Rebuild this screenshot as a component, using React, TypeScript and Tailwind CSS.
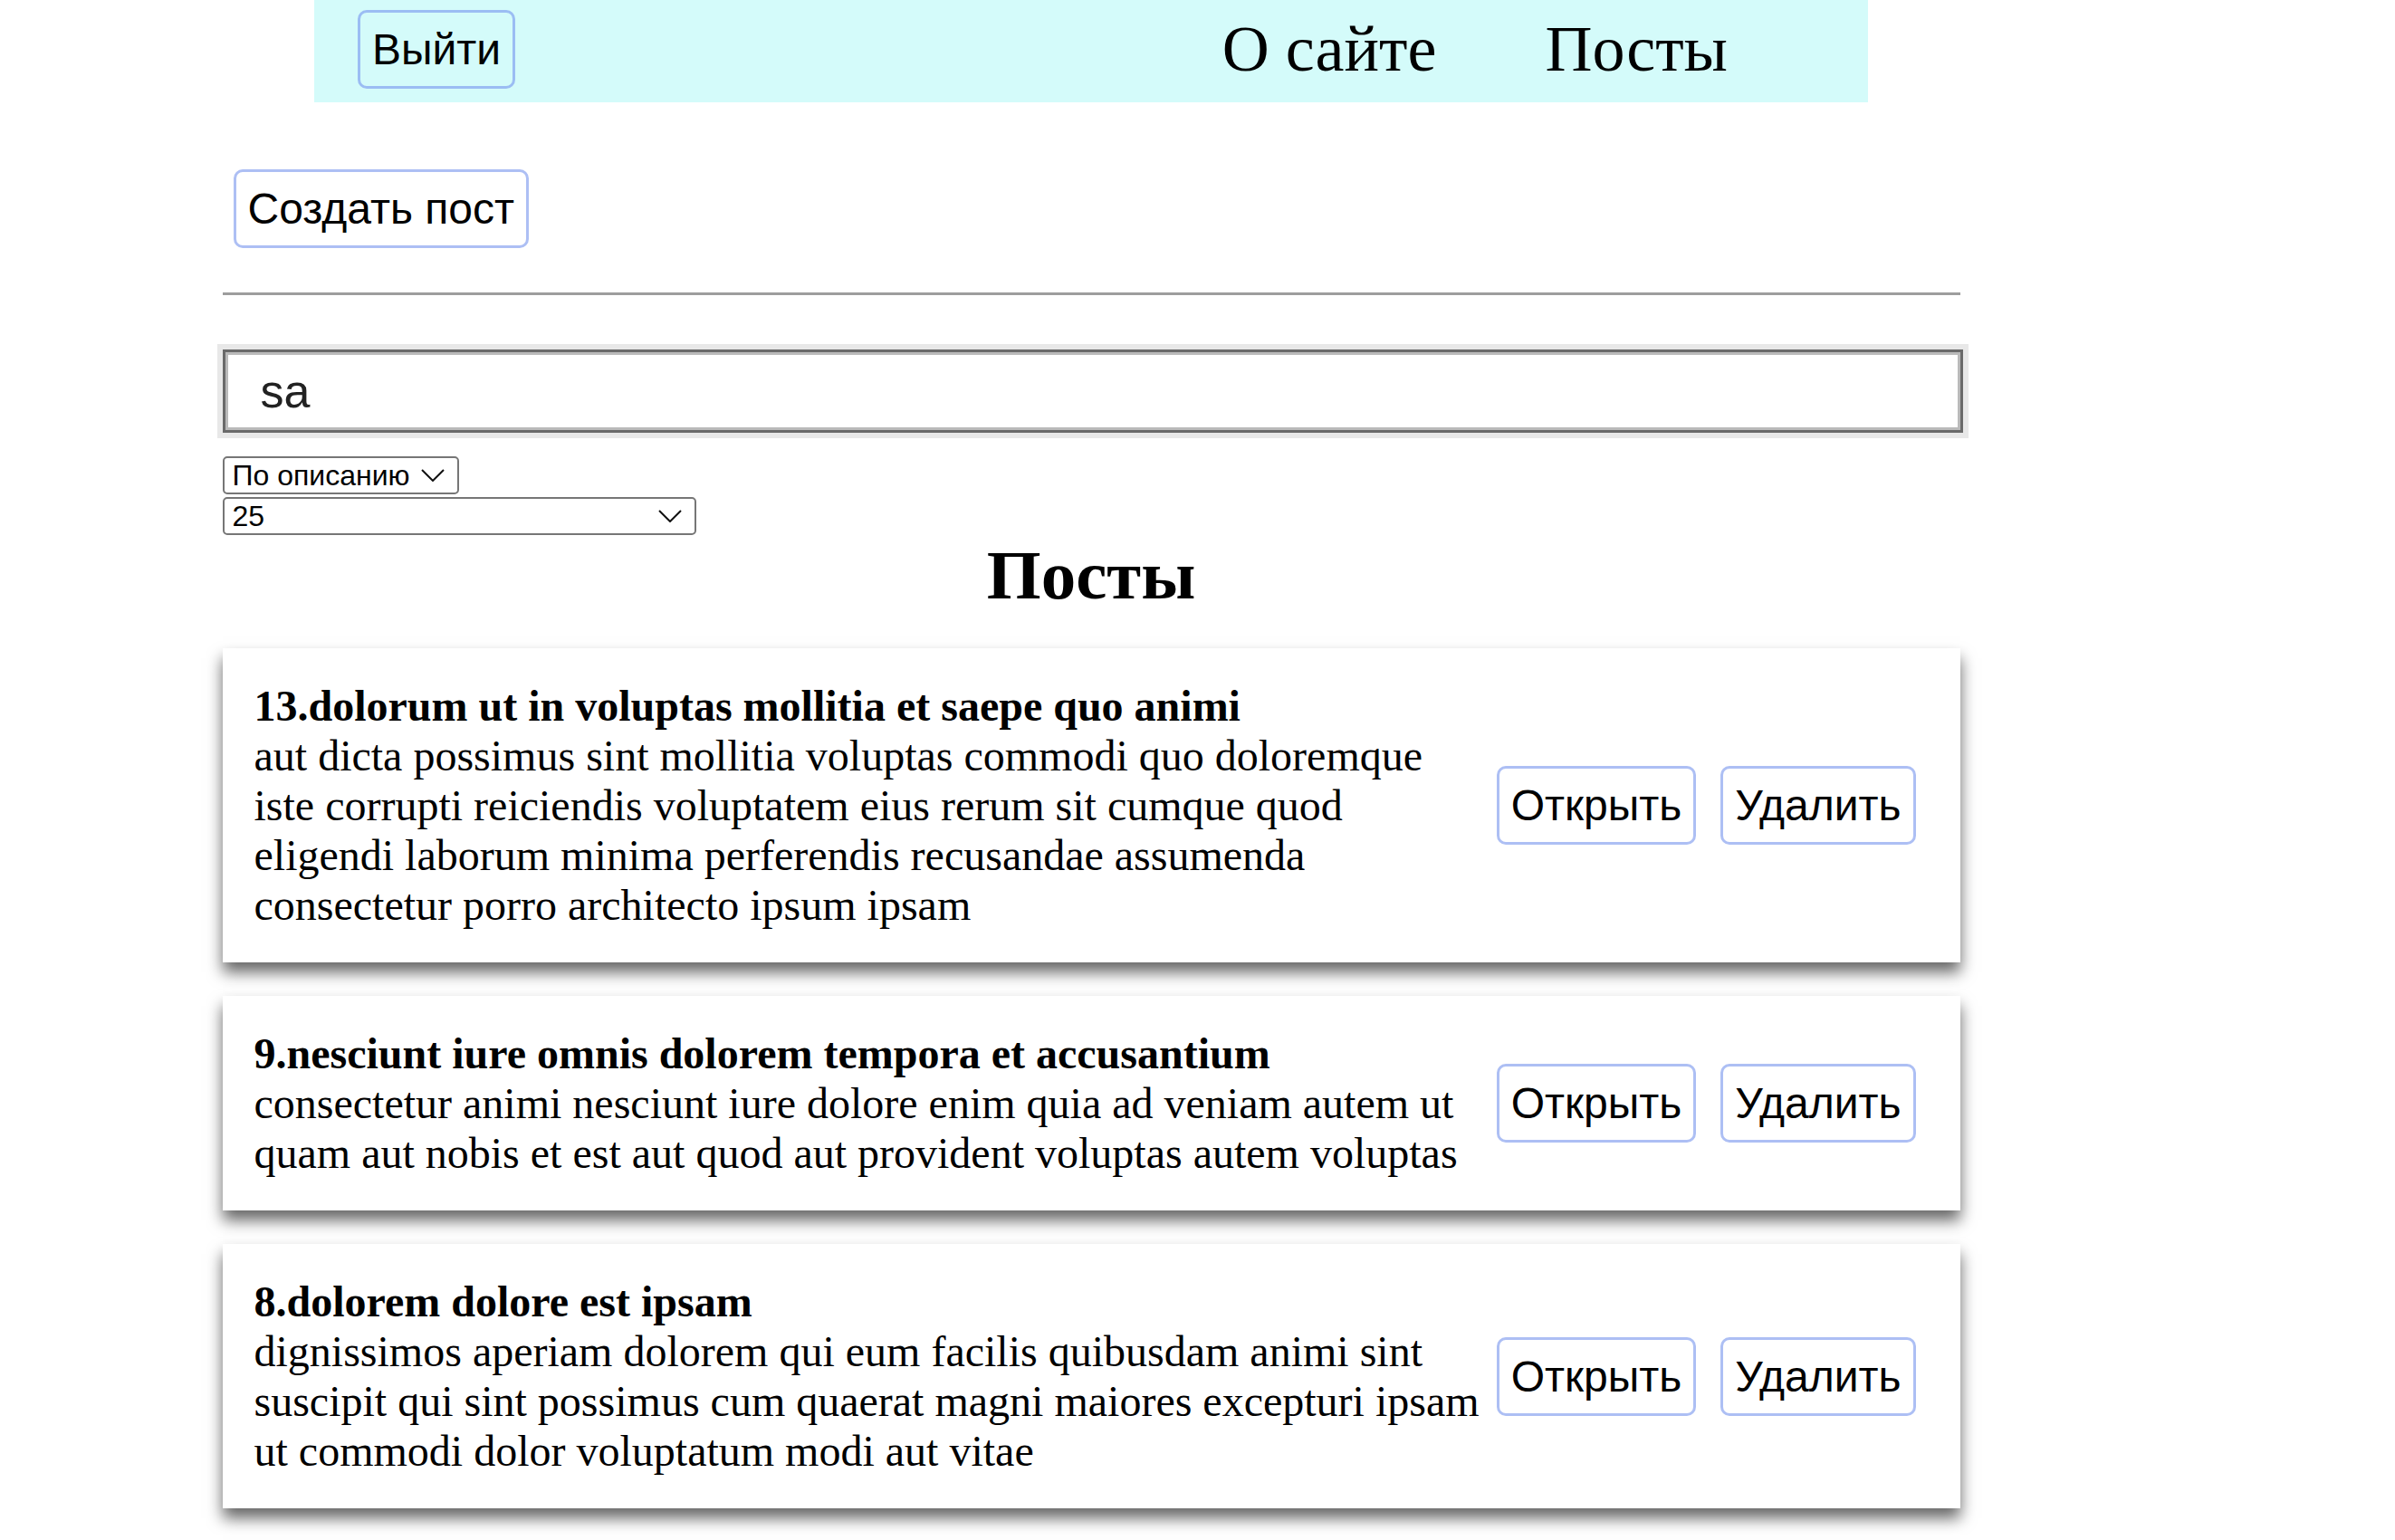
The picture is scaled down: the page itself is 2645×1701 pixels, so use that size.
import React from "react";

type Post = { id: number; title: string; body: string };

const posts: Post[] = [
  {
    id: 13,
    title: "dolorum ut in voluptas mollitia et saepe quo animi",
    body: "aut dicta possimus sint mollitia voluptas commodi quo doloremque iste corrupti reiciendis voluptatem eius rerum sit cumque quod eligendi laborum minima perferendis recusandae assumenda consectetur porro architecto ipsum ipsam",
  },
  {
    id: 9,
    title: "nesciunt iure omnis dolorem tempora et accusantium",
    body: "consectetur animi nesciunt iure dolore enim quia ad veniam autem ut quam aut nobis et est aut quod aut provident voluptas autem voluptas",
  },
  {
    id: 8,
    title: "dolorem dolore est ipsam",
    body: "dignissimos aperiam dolorem qui eum facilis quibusdam animi sint suscipit qui sint possimus cum quaerat magni maiores excepturi ipsam ut commodi dolor voluptatum modi aut vitae",
  },
];

const sans = "font-['Liberation_Sans',Arial,sans-serif]";
const serif = "font-['Liberation_Serif','Times_New_Roman',serif]";

function Button({ children, nav }: { children: React.ReactNode; nav?: boolean }) {
  return (
    <button
      className={`${sans} rounded-[10px] border-[3px] px-[13px] py-[13px] text-[48px] leading-[55px] text-black ${
        nav ? "border-[#9bbdf3] bg-transparent" : "border-[#adbff4] bg-white"
      }`}
    >
      {children}
    </button>
  );
}

function Chevron() {
  return (
    <svg width="26" height="14" viewBox="0 0 26 14" fill="none">
      <polyline points="1,1 13,13 25,1" stroke="#111" strokeWidth="2" />
    </svg>
  );
}

function Select({ value, width }: { value: string; width: string }) {
  return (
    <div
      className={`${sans} ${width} flex h-[42px] items-center justify-between rounded-[5px] border-2 border-[#767676] bg-white pl-[9px] pr-[14px] text-[32px] leading-none text-black`}
    >
      <span>{value}</span>
      <Chevron />
    </div>
  );
}

function PostItem({ post }: { post: Post }) {
  return (
    <div className="flex items-center bg-white py-[36px] pl-[35px] pr-[49px] shadow-[0_11px_16px_rgba(0,0,0,0.6)]">
      <div className={`${serif} w-[1363px] text-[48px] leading-[55px] text-black`}>
        <strong>
          {post.id}.{post.title}
        </strong>
        <div>{post.body}</div>
      </div>
      <div className="ml-auto flex gap-[27px]">
        <Button>Открыть</Button>
        <Button>Удалить</Button>
      </div>
    </div>
  );
}

export default function App() {
  return (
    <div className="min-h-screen bg-white pb-[40px]">
      <div className="w-[2410px]">
        {/* Navbar */}
        <div className="mx-auto flex h-[113px] w-[1716px] items-center justify-between bg-[#d4fbfa] pb-[5px] pl-[48px] pr-[155px]">
          <Button nav>Выйти</Button>
          <div className={`${serif} flex gap-[120px] text-[72px] leading-none text-black`}>
            <span>О сайте</span>
            <span>Посты</span>
          </div>
        </div>

        <div className="mx-auto w-[1919px]">
          <div className="mt-[74px] pl-[12px]">
            <Button>Создать пост</Button>
          </div>

          <div className="mt-[49px] h-[3px] bg-[#9d9d9d]" />

          <input
            readOnly
            value="sa"
            className={`${sans} mt-[60px] block h-[92px] w-[1922px] border-[3px] border-[#6a6a6a] bg-white pl-[39px] text-[52px] text-[#222] shadow-[inset_0_0_0_3px_#bababa,0_0_0_6px_#e8e8e8] outline-none`}
          />

          <div className="mt-[26px] flex flex-col gap-[3px]">
            <Select value="По описанию" width="w-[261px]" />
            <Select value="25" width="w-[523px]" />
          </div>

          <h1 className={`${serif} mt-[2px] text-center text-[77px] font-bold leading-[85px] text-black`}>
            Посты
          </h1>

          <div className="mt-[38px] flex flex-col gap-[37px]">
            {posts.map((p) => (
              <PostItem key={p.id} post={p} />
            ))}
          </div>
        </div>
      </div>
    </div>
  );
}
